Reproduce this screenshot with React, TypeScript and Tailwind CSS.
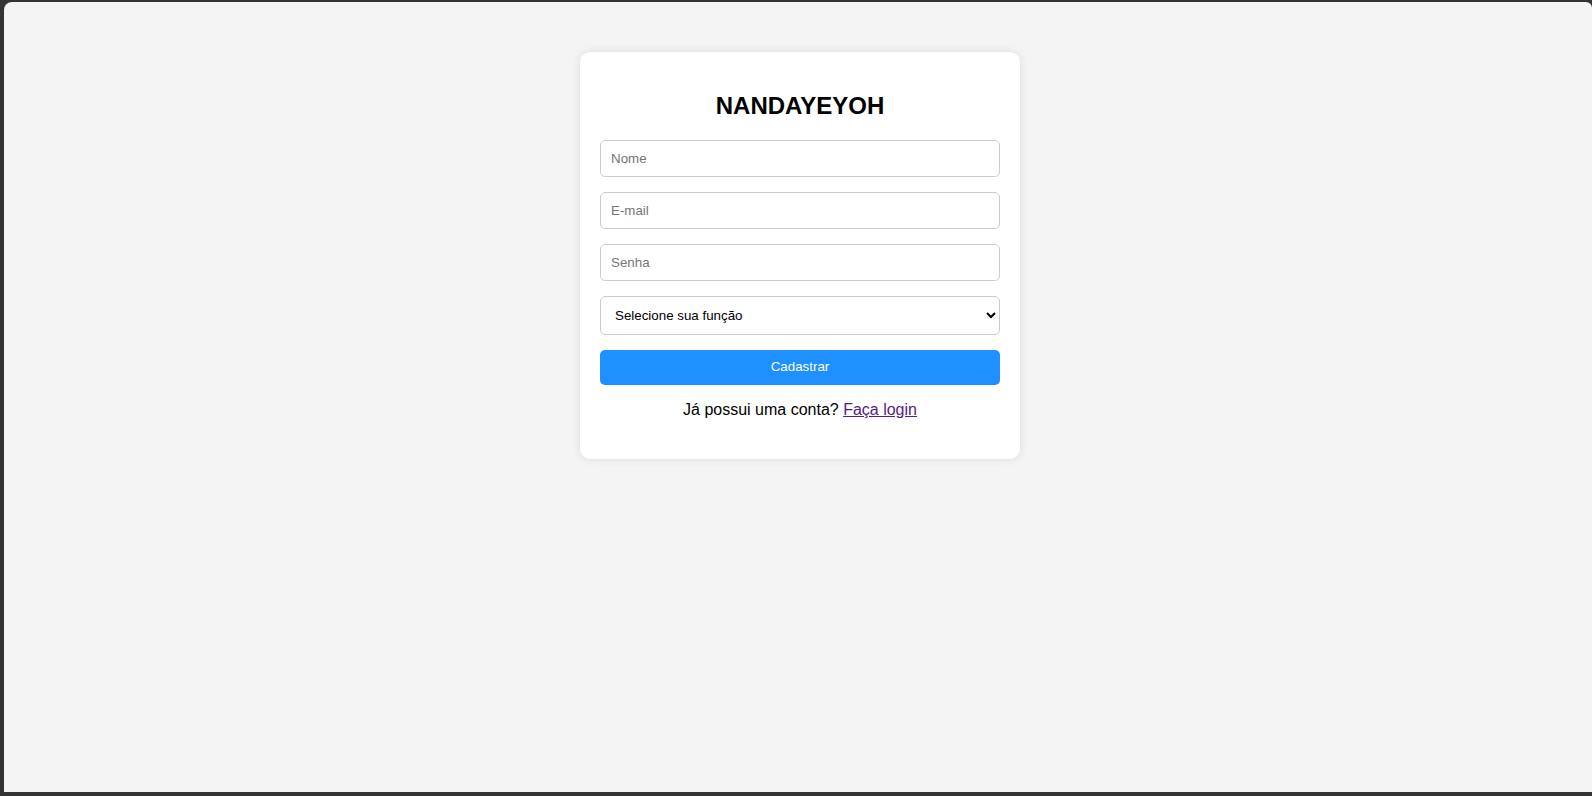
import React from "react";

export default function App() {
  return (
    <div className="w-[1592px] h-[796px] bg-[#333333] pl-[4px] pt-[2px] pb-[4px] overflow-hidden">
      <div
        className="h-full w-full bg-[#f4f4f4] rounded-tl-[8px] rounded-tr-[6px] flex justify-center items-start pl-[4px] pt-[50px]"
        style={{ fontFamily: '"Liberation Sans", Arial, sans-serif' }}
      >
        <div className="w-[440px] bg-white rounded-[10px] shadow-[0_0_10px_rgba(0,0,0,0.1)] px-[20px] pt-[20px] pb-[40px]">
          <h2 className="text-[24px] leading-[27.6px] font-bold text-black text-center my-[20px]">
            NANDAYEYOH
          </h2>
          <form className="flex flex-col gap-[15px]" onSubmit={(e) => e.preventDefault()}>
            <input
              type="text"
              placeholder="Nome"
              className="w-full h-[37px] px-[10px] border border-[#cccccc] rounded-[5px] text-[13.333px] text-black placeholder:text-[#757575] bg-white outline-none"
            />
            <input
              type="email"
              placeholder="E-mail"
              className="w-full h-[37px] px-[10px] border border-[#cccccc] rounded-[5px] text-[13.333px] text-black placeholder:text-[#757575] bg-white outline-none"
            />
            <input
              type="password"
              placeholder="Senha"
              className="w-full h-[37px] px-[10px] border border-[#cccccc] rounded-[5px] text-[13.333px] text-black placeholder:text-[#757575] bg-white outline-none"
            />
            <select
              defaultValue=""
              className="w-full h-[39px] px-[10px] border border-[#cccccc] rounded-[5px] text-[13.333px] text-black bg-white outline-none appearance-auto"
            >
              <option value="">Selecione sua função</option>
              <option value="aluno">Aluno</option>
              <option value="professor">Professor</option>
            </select>
            <button
              type="submit"
              className="w-full h-[35px] bg-[#1e90ff] text-white text-[13.333px] rounded-[5px] border-0"
            >
              Cadastrar
            </button>
          </form>
          <p className="mt-[16px] text-[16px] leading-[18.4px] text-black text-center">
            Já possui uma conta?{" "}
            <a href="#" className="text-[#551a8b] underline">
              Faça login
            </a>
          </p>
        </div>
      </div>
    </div>
  );
}
